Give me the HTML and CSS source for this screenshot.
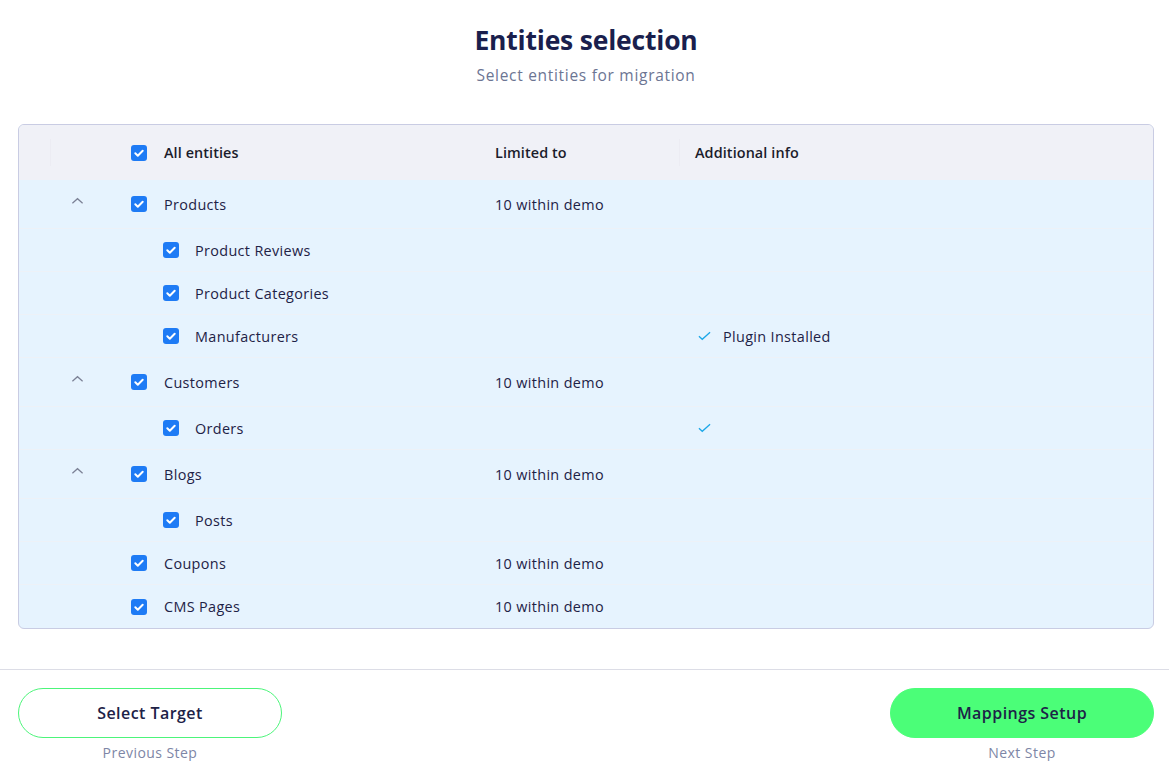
FILE: index.html
```html
<!DOCTYPE html>
<html lang="en">
<head>
<meta charset="utf-8">
<title>Entities selection</title>
<link rel="stylesheet" href="styles.css">
</head>
<body>
<main class="page">
  <header class="intro">
    <h1 class="title">Entities selection</h1>
    <p class="subtitle">Select entities for migration</p>
  </header>

  <section class="table">
    <div class="row head">
      <div class="cell toggle sep"></div>
      <div class="cell name"><span class="cb"><svg viewBox="0 0 16 16"><path d="M4.3 8.3l2.5 2.4 4.9-5" /></svg></span><span>All entities</span></div>
      <div class="cell limit sep">Limited to</div>
      <div class="cell info">Additional info</div>
    </div>

    <div class="row parent">
      <div class="cell toggle"><svg class="chev" viewBox="0 0 14 8"><path d="M1.5 6.5L7 1.5l5.5 5" /></svg></div>
      <div class="cell name"><span class="cb"><svg viewBox="0 0 16 16"><path d="M4.3 8.3l2.5 2.4 4.9-5" /></svg></span><span>Products</span></div>
      <div class="cell limit">10 within demo</div>
      <div class="cell info"></div>
    </div>
    <div class="row child">
      <div class="cell toggle"></div>
      <div class="cell name"><span class="cb"><svg viewBox="0 0 16 16"><path d="M4.3 8.3l2.5 2.4 4.9-5" /></svg></span><span>Product Reviews</span></div>
      <div class="cell limit"></div>
      <div class="cell info"></div>
    </div>
    <div class="row child">
      <div class="cell toggle"></div>
      <div class="cell name"><span class="cb"><svg viewBox="0 0 16 16"><path d="M4.3 8.3l2.5 2.4 4.9-5" /></svg></span><span>Product Categories</span></div>
      <div class="cell limit"></div>
      <div class="cell info"></div>
    </div>
    <div class="row child">
      <div class="cell toggle"></div>
      <div class="cell name"><span class="cb"><svg viewBox="0 0 16 16"><path d="M4.3 8.3l2.5 2.4 4.9-5" /></svg></span><span>Manufacturers</span></div>
      <div class="cell limit"></div>
      <div class="cell info"><svg class="ok" viewBox="0 0 14 10"><path d="M1 5.2l3.6 3.4L13 1" /></svg><span>Plugin Installed</span></div>
    </div>

    <div class="row parent">
      <div class="cell toggle"><svg class="chev" viewBox="0 0 14 8"><path d="M1.5 6.5L7 1.5l5.5 5" /></svg></div>
      <div class="cell name"><span class="cb"><svg viewBox="0 0 16 16"><path d="M4.3 8.3l2.5 2.4 4.9-5" /></svg></span><span>Customers</span></div>
      <div class="cell limit">10 within demo</div>
      <div class="cell info"></div>
    </div>
    <div class="row child">
      <div class="cell toggle"></div>
      <div class="cell name"><span class="cb"><svg viewBox="0 0 16 16"><path d="M4.3 8.3l2.5 2.4 4.9-5" /></svg></span><span>Orders</span></div>
      <div class="cell limit"></div>
      <div class="cell info"><svg class="ok" viewBox="0 0 14 10"><path d="M1 5.2l3.6 3.4L13 1" /></svg></div>
    </div>

    <div class="row parent">
      <div class="cell toggle"><svg class="chev" viewBox="0 0 14 8"><path d="M1.5 6.5L7 1.5l5.5 5" /></svg></div>
      <div class="cell name"><span class="cb"><svg viewBox="0 0 16 16"><path d="M4.3 8.3l2.5 2.4 4.9-5" /></svg></span><span>Blogs</span></div>
      <div class="cell limit">10 within demo</div>
      <div class="cell info"></div>
    </div>
    <div class="row child">
      <div class="cell toggle"></div>
      <div class="cell name"><span class="cb"><svg viewBox="0 0 16 16"><path d="M4.3 8.3l2.5 2.4 4.9-5" /></svg></span><span>Posts</span></div>
      <div class="cell limit"></div>
      <div class="cell info"></div>
    </div>

    <div class="row single">
      <div class="cell toggle"></div>
      <div class="cell name"><span class="cb"><svg viewBox="0 0 16 16"><path d="M4.3 8.3l2.5 2.4 4.9-5" /></svg></span><span>Coupons</span></div>
      <div class="cell limit">10 within demo</div>
      <div class="cell info"></div>
    </div>
    <div class="row single last">
      <div class="cell toggle"></div>
      <div class="cell name"><span class="cb"><svg viewBox="0 0 16 16"><path d="M4.3 8.3l2.5 2.4 4.9-5" /></svg></span><span>CMS Pages</span></div>
      <div class="cell limit">10 within demo</div>
      <div class="cell info"></div>
    </div>
  </section>
</main>

<footer class="footer">
  <div class="step">
    <button class="btn outline">Select Target</button>
    <span class="step-label">Previous Step</span>
  </div>
  <div class="step">
    <button class="btn filled">Mappings Setup</button>
    <span class="step-label">Next Step</span>
  </div>
</footer>
</body>
</html>
```

FILE: styles.css
```css
* { box-sizing: border-box; }

html, body {
  margin: 0;
  padding: 0;
  background: #ffffff;
  font-family: "Open Sans", "Noto Sans", "Liberation Sans", sans-serif;
  color: #1e2246;
}

.page {
  padding: 0 15px 0 18px;
}

.intro {
  text-align: center;
  padding-top: 22px;
}

.title {
  margin: 0;
  font-size: 26.5px;
  line-height: 36px;
  font-weight: 700;
  color: #1a1f4d;
  letter-spacing: -0.2px;
}

.subtitle {
  margin: 5px 0 0;
  font-size: 15.5px;
  line-height: 24px;
  letter-spacing: 0.7px;
  color: #6c7593;
}

.table {
  margin-top: 37px;
  border: 1px solid #c9cce3;
  border-radius: 6px;
  overflow: hidden;
  background: #e6f3fe;
}

.row {
  display: grid;
  grid-template-columns: 112px 364px 200px 1fr;
  align-items: center;
  border-bottom: 1px solid #edf1f7;
  font-size: 14.4px;
  font-weight: 500;
  letter-spacing: 0.35px;
}

.row.last { border-bottom: none; }

.row.head {
  height: 55px;
  background: #f0f1f7;
  border-bottom: none;
  font-weight: 600;
  letter-spacing: 0.1px;
  color: #1b1c2b;
}

.row.parent { height: 49px; }
.row.child { height: 43px; }
.row.single { height: 43px; }

.cell {
  display: flex;
  align-items: center;
  height: 100%;
}

.head .sep { position: relative; }
.head .toggle.sep::before {
  content: "";
  position: absolute;
  left: 31px;
  top: 14px;
  bottom: 14px;
  width: 1px;
  background: #ececf3;
}
.head .limit.sep::after {
  content: "";
  position: absolute;
  right: 15px;
  top: 14px;
  bottom: 14px;
  width: 1px;
  background: #ececf3;
}

.toggle {
  justify-content: flex-start;
  padding-left: 52px;
}

.chev {
  width: 13px;
  height: 8px;
  fill: none;
  stroke: #7b8095;
  stroke-width: 1.3;
  margin-top: -6px;
}

.name { gap: 17px; }
.child .name { padding-left: 32px; gap: 16px; }

.cb {
  width: 16px;
  height: 16px;
  border-radius: 3px;
  background: #1e7bf5;
  display: inline-flex;
  flex-shrink: 0;
}

.cb svg {
  width: 16px;
  height: 16px;
  fill: none;
  stroke: #ffffff;
  stroke-width: 2;
  stroke-linecap: round;
  stroke-linejoin: round;
}

.info { gap: 12px; padding-left: 3px; }
.head .info { padding-left: 0; }

.ok {
  width: 13px;
  height: 10px;
  fill: none;
  stroke: #1ca7e8;
  stroke-width: 1.4;
}

.footer {
  margin-top: 40px;
  border-top: 1px solid #dcdde6;
  padding: 18px 15px 0 18px;
  display: flex;
  justify-content: space-between;
}

.step {
  display: flex;
  flex-direction: column;
  align-items: center;
  width: 264px;
}

.btn {
  width: 264px;
  height: 50px;
  border-radius: 25px;
  font-family: inherit;
  font-size: 16px;
  font-weight: 600;
  letter-spacing: 0.45px;
  color: #1d2247;
  cursor: pointer;
}

.btn.outline {
  background: #ffffff;
  border: 1px solid #4cf57a;
}

.btn.filled {
  background: #4bfe78;
  border: 1px solid #4bfe78;
}

.step-label {
  margin-top: 5px;
  font-size: 14px;
  line-height: 20px;
  letter-spacing: 0.45px;
  color: #7d86a6;
}
```
